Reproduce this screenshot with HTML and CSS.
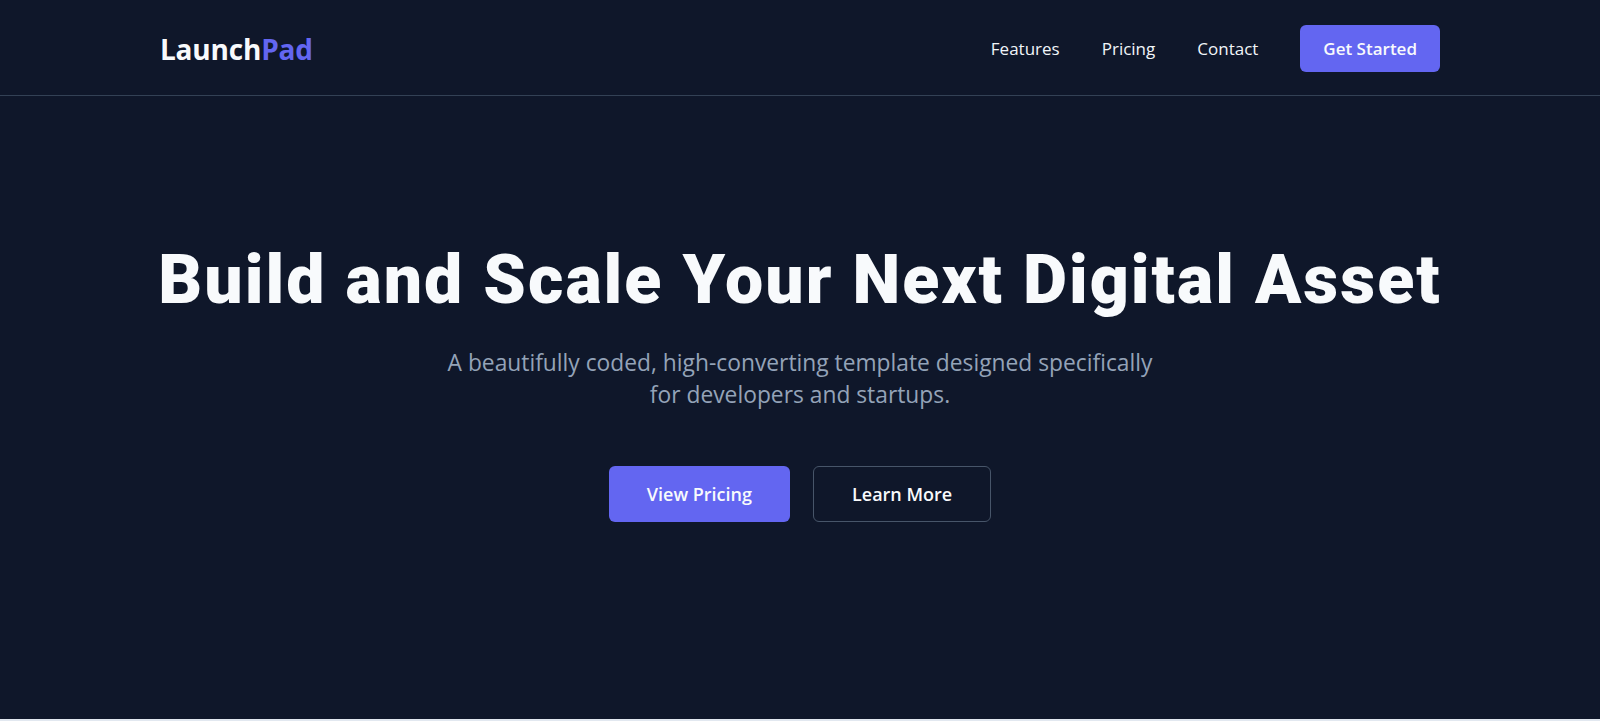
FILE: index.html
```html
<!DOCTYPE html>
<html lang="en">
<head>
<meta charset="utf-8">
<title>LaunchPad</title>
<link rel="stylesheet" href="styles.css">
</head>
<body>
<header class="site-header">
  <div class="container nav-row">
    <a class="logo" href="#">Launch<span class="logo-accent">Pad</span></a>
    <nav class="nav">
      <a class="nav-link" href="#">Features</a>
      <a class="nav-link" href="#">Pricing</a>
      <a class="nav-link" href="#">Contact</a>
      <a class="btn btn-primary btn-nav" href="#">Get Started</a>
    </nav>
  </div>
</header>
<main>
  <section class="hero">
    <div class="container hero-inner">
      <h1 class="hero-title">Build and Scale Your Next Digital Asset</h1>
      <p class="hero-sub">A beautifully coded, high-converting template designed specifically for developers and startups.</p>
      <div class="hero-actions">
        <a class="btn btn-primary btn-lg" href="#">View Pricing</a>
        <a class="btn btn-outline btn-lg" href="#">Learn More</a>
      </div>
    </div>
  </section>
  <section class="next-section"></section>
</main>
</body>
</html>
```
FILE: styles.css
```css
* { box-sizing: border-box; }
html, body { margin: 0; padding: 0; }
body {
  background: #0f172a;
  color: #f8fafc;
  font-family: "Open Sans", "Noto Sans", sans-serif;
}
a { text-decoration: none; color: inherit; }
.container {
  max-width: 1280px;
  margin: 0 auto;
}
.site-header {
  border-bottom: 1px solid #334155;
}
.nav-row {
  height: 95px;
  padding-top: 2px;
  display: flex;
  align-items: center;
  justify-content: space-between;
}
.logo {
  font-size: 28px;
  font-weight: 700;
  color: #f8fafc;
  letter-spacing: -0.2px;
}
.logo-accent { color: #6366f1; }
.nav {
  display: flex;
  align-items: center;
  gap: 42px;
}
.nav-link {
  font-size: 17px;
  font-weight: 500;
  color: #f1f5f9;
}
.btn {
  display: inline-flex;
  align-items: center;
  justify-content: center;
  border-radius: 6px;
  font-weight: 600;
  color: #f8fafc;
}
.btn-primary { background: #6366f1; }
.btn-nav {
  height: 47px;
  padding: 0 23px;
  font-size: 17px;
}
.hero {
  height: 623px;
}
.hero-inner {
  display: flex;
  flex-direction: column;
  align-items: center;
  text-align: center;
  padding-top: 143px;
}
.hero-title {
  margin: 0;
  font-family: "Roboto", sans-serif;
  font-weight: 900;
  font-size: 68px;
  line-height: 82px;
  letter-spacing: 2.05px;
  white-space: nowrap;
  color: #f8fafc;
}
.hero-sub {
  margin: 26px 0 0;
  max-width: 720px;
  font-size: 22.8px;
  line-height: 32px;
  color: #94a3b8;
}
.hero-actions {
  margin-top: 55px;
  display: flex;
  gap: 23px;
}
.btn-lg {
  height: 56px;
  padding: 0 38px;
  font-size: 18px;
}
.btn-outline {
  border: 1px solid #475569;
  background: transparent;
}
.next-section {
  height: 200px;
  background: #e2e8f0;
}
```
